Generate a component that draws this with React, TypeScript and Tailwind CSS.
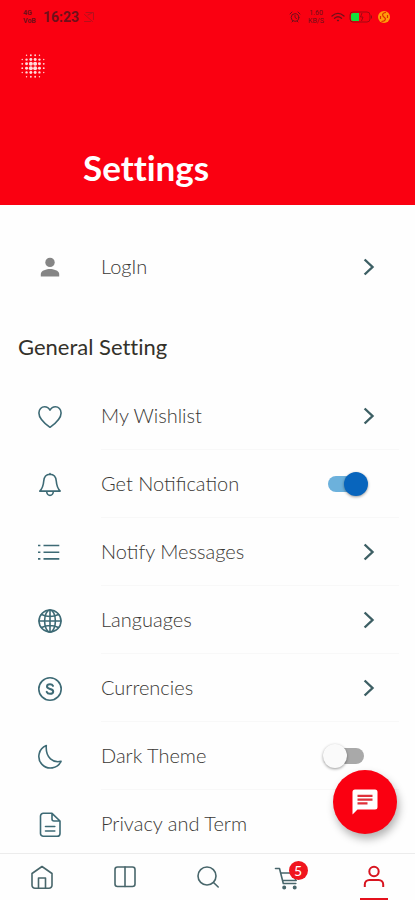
import type { ReactNode } from "react";
import { useState } from "react";

const line = {
  fill: "none",
  stroke: "currentColor",
  strokeWidth: 1.6,
  strokeLinecap: "round" as const,
  strokeLinejoin: "round" as const,
};

function Glyph({ children }: { children: ReactNode }) {
  return (
    <svg viewBox="0 0 26 26" className="size-[26px] shrink-0" aria-hidden="true" {...line}>
      {children}
    </svg>
  );
}

const PersonIcon = () => (
  <svg viewBox="0 0 26 26" className="size-[26px] shrink-0 text-[#858585]" fill="currentColor" aria-hidden="true">
    <circle cx="13" cy="8.4" r="4.700" />
    <path d="M3.800 22.500v-2.600c0-3.500 6-4.900 9.200-4.900s9.200 1.400 9.200 4.900v2.600z" />
  </svg>
);

const HeartIcon = () => (
  <Glyph>
    <path d="M13 24.300C8.500 21.100 1.900 15.700 1.900 9.900c0-3.600 2.600-6.200 5.700-6.200 2.400 0 4.300 1.300 5.400 3.400 1.100-2.100 3-3.400 5.400-3.400 3.100 0 5.700 2.600 5.700 6.200 0 5.800-6.600 11.200-11.100 14.400z" />
  </Glyph>
);

const BellIcon = () => (
  <Glyph>
    <path d="M13 2.500v1M13 3.300c-4 0-6 3-6.300 7-.4 5.200-1.400 7.300-3.900 9.800h20.400c-2.500-2.500-3.500-4.600-3.900-9.800C19 6.300 17 3.300 13 3.300zM9.700 20.500a3.300 3.900 0 0 0 6.600 0" />
  </Glyph>
);

const ListIcon = () => (
  <Glyph>
    <path strokeLinecap="butt" d="M1 6.500h2.400M1 13.200h2.400M1 19.900h2.400M6.500 6.500h15.800M6.500 13.200h15.800M6.500 19.900h15.800" />
  </Glyph>
);

const GlobeIcon = () => (
  <Glyph>
    <circle cx="13" cy="14" r="11" />
    <ellipse cx="13" cy="14" rx="5.400" ry="11" />
    <path d="M13 3v22M2 14h22M4.500 7.500c5 2.300 12 2.300 17 0M4.500 20.500c5-2.300 12-2.300 17 0" />
  </Glyph>
);

const CoinIcon = () => (
  <Glyph>
    <circle cx="13" cy="14" r="11.200" />
    <path
      strokeWidth="2"
      d="M16 10.900c-.5-1.100-1.500-1.700-3-1.700-1.700 0-3 .8-3 2.300 0 3.400 6.200 1.500 6.200 4.900 0 1.600-1.400 2.400-3.200 2.400-1.600 0-2.800-.7-3.300-1.900"
    />
  </Glyph>
);

const MoonIcon = () => (
  <Glyph>
    <path d="M9.300 2.600A11.600 11.600 0 1 0 24 18.300c-7.500 1.800-15.700-3.200-14.700-15.700z" />
  </Glyph>
);

const DocumentIcon = () => (
  <Glyph>
    <path d="M15 2.300H6.300A2.800 2.800 0 0 0 3.500 5.100v17.300a2.800 2.800 0 0 0 2.800 2.800h13.900a2.800 2.800 0 0 0 2.800-2.800V10zM15 2.300V8a2 2 0 0 0 2 2h6M8.500 15.500h9.300M8.500 20h9.300" />
  </Glyph>
);

const Chevron = () => (
  <svg viewBox="0 0 12 18" className="h-[18px] w-3 shrink-0 text-[#3d5f64]" aria-hidden="true">
    <path d="M1.600 1.500 9.500 9l-7.900 7.500" fill="none" stroke="currentColor" strokeWidth="2.400" />
  </svg>
);

function StatusBar() {
  return (
    <div className="flex h-[34px] items-center justify-between pr-6 pl-[23px] font-['Roboto',sans-serif] text-[#70101a]">
      <div className="flex items-center gap-1">
        <div className="w-4 text-[7px] leading-2 font-bold">
          <div>4G</div>
          <div>VoB</div>
        </div>
        <span className="text-[14px] leading-4 font-bold">16:23</span>
        <svg viewBox="0 0 12 12" className="size-3 text-[#b5101c]" aria-hidden="true" {...line} strokeWidth={1}>
          <path d="M3 1.500h7.500v7M1.500 3.500l8 7M1.500 10.500h6M5 4l4-2" />
        </svg>
      </div>
      <div className="flex items-center gap-1">
        <svg viewBox="0 0 12 12" className="size-3" aria-hidden="true" {...line} strokeWidth={1}>
          <circle cx="6" cy="6.500" r="3.800" />
          <path d="M6 4.500v2l1.500 1M1 3l2-2M11 3 9 1M3 11l1-1M9 11l-1-1" />
        </svg>
        <div className="w-[22px] text-center text-[7px] leading-2">
          <div>1.60</div>
          <div>KB/S</div>
        </div>
        <svg viewBox="0 0 14 12" className="h-3 w-[14px]" aria-hidden="true" {...line} strokeWidth={1.3}>
          <path d="M1 5c4-3.500 8-3.500 12 0M3.500 7.300c2.300-2 4.700-2 7 0M6.500 9.500h1" />
        </svg>
        <svg viewBox="0 0 24 12" className="h-3 w-6" aria-hidden="true">
          <rect x="1" y="1" width="20" height="10" rx="3" fill="none" stroke="#a00812" />
          <path d="M4 2h6v8H4a2 2 0 0 1-2-2V4a2 2 0 0 1 2-2z" fill="#12e33c" />
          <path d="m13 2-1.500 4H14l-1.500 4M22.500 4.500v3" fill="none" stroke="#a00812" />
        </svg>
        <svg viewBox="0 0 14 14" className="size-[14px]" aria-hidden="true">
          <circle cx="7" cy="7" r="6" fill="#ff9b0a" />
          <path d="M9 2.500C3.500 3 6 6.500 7.500 7.500S9 11 4.500 11.500M10.500 5v3M3.500 6v3" fill="none" stroke="#e02a00" strokeWidth="1.200" />
        </svg>
      </div>
    </div>
  );
}

const steps = [-2.5, -1.5, -0.5, 0.5, 1.5, 2.5];
const dots = steps.flatMap((y) => steps.map((x) => ({ x, y, d: Math.hypot(x, y) }))).filter(({ d }) => d < 3);

function Logo() {
  return (
    <svg viewBox="0 0 24 24" className="size-6" role="img" aria-label="Logo">
      {dots.map(({ x, y, d }) => (
        <circle key={`${x} ${y}`} cx={12 + x * 4.3} cy={12 + y * 4.3} r={2.4 - d * 0.58} fill="#ffdcdc" />
      ))}
    </svg>
  );
}

type Item = { label: string; icon: () => ReactNode; toggle?: boolean };

const items: Item[] = [
  { label: "My Wishlist", icon: HeartIcon },
  { label: "Get Notification", icon: BellIcon, toggle: true },
  { label: "Notify Messages", icon: ListIcon },
  { label: "Languages", icon: GlobeIcon },
  { label: "Currencies", icon: CoinIcon },
  { label: "Dark Theme", icon: MoonIcon, toggle: false },
  { label: "Privacy and Term", icon: DocumentIcon },
];

const rowClass = "flex h-[68px] w-full items-center pr-10 pl-[37px] text-left text-[#3d6a75]";
const labelClass = "ml-[38px] grow pb-0.5 text-[20px] leading-6 font-light text-[#3a3835]";

function Row({ label, icon: Icon, toggle }: Item) {
  const [on, setOn] = useState(toggle ?? false);
  if (toggle === undefined) {
    return (
      <button type="button" className={rowClass}>
        <Icon />
        <span className={labelClass}>{label}</span>
        <Chevron />
      </button>
    );
  }
  return (
    <label className={rowClass}>
      <Icon />
      <span className={labelClass}>{label}</span>
      <input
        type="checkbox"
        role="switch"
        checked={on}
        onChange={(e) => setOn(e.target.checked)}
        className="relative mr-[11px] h-4 w-9 shrink-0 appearance-none rounded-full bg-[#a9a9a9] before:absolute before:-top-1 before:-left-[5px] before:size-6 before:rounded-full before:bg-[#fafafa] before:shadow-[0_1px_3px_rgba(0,0,0,0.4)] checked:bg-[#6cb1dc] checked:before:left-4 checked:before:bg-[#0865bd]"
      />
    </label>
  );
}

const HomeIcon = () => (
  <Glyph>
    <path d="M13 2.500 3 9.500v11.800a3 3 0 0 0 3 3h14a3 3 0 0 0 3-3V9.500zM9.500 24v-10h7v10" />
  </Glyph>
);
const ColumnsIcon = () => (
  <Glyph>
    <rect x="3" y="3" width="20" height="19.500" rx="2.500" />
    <path d="M13 3v19.500" />
  </Glyph>
);
const SearchIcon = () => (
  <Glyph>
    <circle cx="12" cy="12" r="9" />
    <path d="m18.500 18.500 4.700 4.500" />
  </Glyph>
);
const CartIcon = () => (
  <Glyph>
    <path d="M1.500 4.500h4l3.800 15h12.500M6.800 9h17l-2.600 7.500M8.700 16.500h13.500" />
    <circle cx="10.200" cy="23.500" r="1.200" fill="currentColor" />
    <circle cx="20.700" cy="23.500" r="1.200" fill="currentColor" />
  </Glyph>
);
const AccountIcon = () => (
  <Glyph>
    <circle cx="13" cy="7.500" r="4.700" strokeWidth="2" />
    <path strokeWidth="2" strokeLinecap="butt" d="M3.800 23v-2.500a4.500 4.500 0 0 1 4.500-4.500h9.400a4.500 4.500 0 0 1 4.500 4.500V23" />
  </Glyph>
);

const tabs = [
  { name: "Home", icon: HomeIcon },
  { name: "Categories", icon: ColumnsIcon },
  { name: "Search", icon: SearchIcon },
  { name: "Cart", icon: CartIcon, badge: 5 },
  { name: "Account", icon: AccountIcon, active: true },
];

export default function App() {
  return (
    <div className="relative flex h-screen flex-col overflow-hidden bg-[#fefefe] font-['Lato',sans-serif]">
      <header className="flex h-[205px] shrink-0 flex-col bg-[#fa0011] text-white">
        <StatusBar />
        <div className="mt-5 pl-[21px]">
          <Logo />
        </div>
        <h1 className="mt-auto mb-[18px] pl-[83px] text-[35px] leading-10 font-bold [font-variant-ligatures:none]">Settings</h1>
      </header>

      <main className="grow overflow-y-auto [scrollbar-width:none]">
        <div className="pt-7">
          <Row label="LogIn" icon={PersonIcon} />
        </div>
        <h2 className="mt-8 mb-[21px] pl-[18px] text-[22px] leading-7 text-[#33312a] [font-variant-ligatures:none]">General Setting</h2>
        <ul>
          {items.map((item) => (
            <li key={item.label} className="relative after:absolute after:right-4 after:bottom-0 after:left-[101px] after:h-px after:bg-[#f8f8f8]">
              <Row {...item} />
            </li>
          ))}
        </ul>
      </main>

      <button
        type="button"
        aria-label="Chat"
        className="absolute right-[18px] bottom-[66px] flex size-16 items-center justify-center rounded-full bg-[#fa0011] text-white shadow-[2px_5px_8px_rgba(0,0,0,0.3)]"
      >
        <svg viewBox="0 0 24 24" className="size-[30px]" aria-hidden="true">
          <path d="M4 2h16a2 2 0 0 1 2 2v12a2 2 0 0 1-2 2H6l-4 4V4a2 2 0 0 1 2-2z" fill="currentColor" />
          <path d="M6 7h12M6 10h12M6 13h8" stroke="#e0303a" strokeWidth="1.800" />
        </svg>
      </button>

      <nav className="grid h-[47px] shrink-0 grid-cols-5 border-t border-[#ececec] bg-[#fefefe] text-[#48666b]">
        {tabs.map(({ name, icon: Icon, badge, active }) => (
          <a
            key={name}
            href={`#${name.toLowerCase()}`}
            aria-label={name}
            className={
              active
                ? "relative flex items-center justify-center text-[#d8141f] after:absolute after:bottom-0 after:h-0.5 after:w-7 after:bg-[#e5101c]"
                : "relative flex items-center justify-center"
            }
          >
            <span className={badge ? "relative mr-2" : "relative"}>
              <Icon />
              {badge && (
                <span className="absolute -top-[3px] -right-2 flex size-[19px] items-center justify-center rounded-full bg-[#f0151d] text-[14px] leading-4 text-white">
                  {badge}
                </span>
              )}
            </span>
          </a>
        ))}
      </nav>
    </div>
  );
}
